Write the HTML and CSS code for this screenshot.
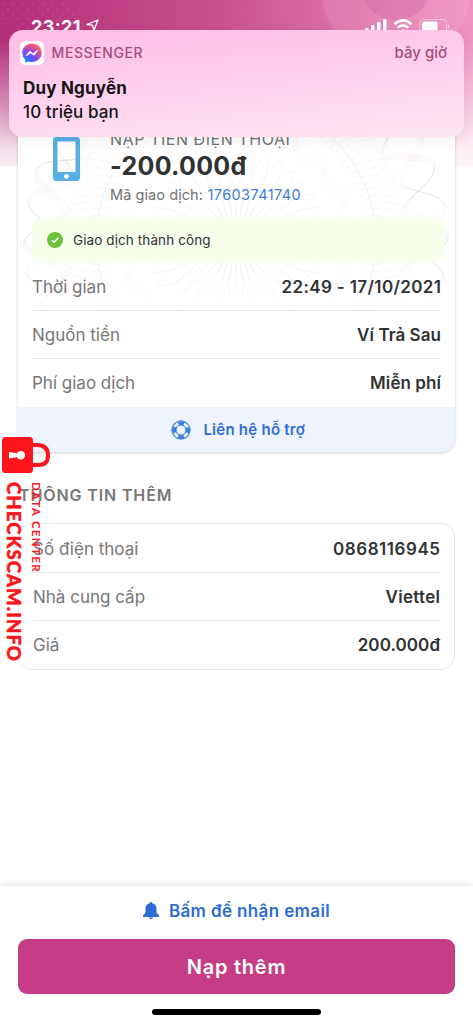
FILE: index.html
```html
<!DOCTYPE html>
<html lang="vi">
<head>
<meta charset="utf-8">
<title>Chi tiết giao dịch</title>
<link rel="stylesheet" href="styles.css">
</head>
<body>
<main class="screen">
  <header class="status">
    <svg class="status-art" viewBox="0 0 473 168" aria-hidden="true">
      <defs><pattern id="dots" width="10" height="10" patternUnits="userSpaceOnUse"><circle cx="3" cy="4" r="1.2" fill="#fff" opacity=".07"/><circle cx="8" cy="9" r="1.2" fill="#fff" opacity=".07"/></pattern></defs>
      <path d="M0 0H60Q90 15 80 30H0V75z" fill="url(#dots)"/>
      <circle cx="396" cy="-12" r="75" fill="#fff" opacity=".1"/>
      <circle cx="396" cy="-16" r="36" fill="#b94484" opacity=".18"/>
    </svg>
    <div class="status-row">
      <span class="clock t">23:21</span>
      <svg class="loc" viewBox="0 0 13 12"><path d="M1 5.5 12 1 8 11 6.5 6.2z" fill="none" stroke="#fff" stroke-width="1.3" stroke-linejoin="round"/></svg>
      <svg class="signals" viewBox="0 0 86 16"><g fill="#fff"><rect x="0" y="9" width="3.500" height="6" rx="1"/><rect x="6" y="6" width="3.500" height="9" rx="1"/><rect x="12" y="3" width="3.500" height="12" rx="1"/><rect x="18" y="0" width="3.500" height="15" rx="1"/></g><g fill="none" stroke="#fff" stroke-width="2.600"><path d="M29.500 5.200Q38-2.500 46.500 5.200"/><path d="M32.700 8.800Q38 4 43.300 8.800"/></g><path d="M35 11.500Q38 9 41 11.500L38 14.500z" fill="#fff"/><rect x="55" y=".5" width="26.500" height="14" rx="4" fill="none" stroke="#fff" stroke-opacity=".45"/><rect x="57" y="2.500" width="15.500" height="12" rx="2" fill="#fff"/><path d="M83 5q3 2.500 0 5z" fill="#fff" opacity=".5"/></svg>
    </div>
  </header>

  <section class="card">
    <svg class="guilloche" id="guilloche" viewBox="0 0 437 200" aria-hidden="true"></svg>
    <div class="summary">
      <svg class="phone" viewBox="0 0 27 44"><path fill="#57b0e5" fill-rule="evenodd" d="M3.500 0h20A3.500 3.500 0 0 1 27 3.500v37a3.500 3.500 0 0 1-3.500 3.500h-20A3.500 3.500 0 0 1 0 40.500v-37A3.500 3.500 0 0 1 3.500 0zM4.500 4.500V35h18V4.500zM13.500 37a2.400 2.400 0 1 0 .01 0z"/></svg>
      <div class="amounts">
        <div class="kind"><span class="t">NẠP TIỀN ĐIỆN THOẠI</span></div>
        <div class="amount"><span class="t">-200.000đ</span></div>
        <div class="code"><span class="t code-label">Mã giao dịch:</span> <span class="t code-no">17603741740</span></div>
      </div>
    </div>
    <div class="success">
      <svg class="check" viewBox="0 0 16 16"><circle cx="8" cy="8" r="8" fill="#6cc13c"/><path d="M4.800 8.200 7 10.300 11.500 5.800" fill="none" stroke="#fff" stroke-width="1.500"/></svg>
      <span class="t">Giao dịch thành công</span>
    </div>
    <div class="rows">
      <div class="row"><span class="t label">Thời gian</span><span class="t value time">22:49 - 17/10/2021</span></div>
      <div class="row"><span class="t label">Nguồn tiền</span><span class="t value">Ví Trả Sau</span></div>
      <div class="row"><span class="t label">Phí giao dịch</span><span class="t value">Miễn phí</span></div>
    </div>
    <div class="support">
      <svg class="buoy" viewBox="0 0 20 20"><circle cx="10" cy="10" r="7" fill="none" stroke="#3b82e0" stroke-width="4.200"/><circle cx="10" cy="10" r="7" fill="none" stroke="#f0f4fe" stroke-width="3" stroke-dasharray="5 5.996" stroke-dashoffset="-3"/><circle cx="10" cy="10" r="9.200" fill="none" stroke="#3b82e0"/><circle cx="10" cy="10" r="5" fill="none" stroke="#3b82e0"/></svg>
      <span class="t">Liên hệ hỗ trợ</span>
    </div>
  </section>

  <h2 class="heading"><span class="t">THÔNG TIN THÊM</span></h2>
  <section class="info">
    <div class="row"><span class="t label">Số điện thoại</span><span class="t value number">0868116945</span></div>
    <div class="row"><span class="t label">Nhà cung cấp</span><span class="t value provider">Viettel</span></div>
    <div class="row"><span class="t label">Giá</span><span class="t value">200.000đ</span></div>
  </section>

  <footer class="footer">
    <div class="email">
      <svg class="bell" viewBox="0 0 16 18"><path fill="#2d6cd3" d="M8 0q1.300 0 1.300 1.200Q13.500 2 13.500 7v3q0 1.600 2 2.500Q16 13 16 15H0q0-2 .5-2.500Q2.500 11.600 2.500 10V7q0-5 4.200-5.800Q6.700 0 8 0zM5.800 15.600h4.400Q9.800 17.200 8 17.200T5.800 15.600z"/></svg>
      <span class="t">Bấm để nhận email</span>
    </div>
    <button class="cta"><span class="t">Nạp thêm</span></button>
    <div class="home"></div>
  </footer>

  <aside class="notice">
    <div class="notice-top">
      <svg class="messenger" viewBox="0 0 24 24"><defs><radialGradient id="msg" cx=".2" cy="1" r="1.100"><stop offset="0" stop-color="#0a8cff"/><stop offset=".5" stop-color="#7a45f8"/><stop offset=".8" stop-color="#e0508c"/><stop offset="1" stop-color="#ff6968"/></radialGradient></defs><rect width="24" height="24" rx="5.500" fill="#fff"/><path d="M12 2.500C6.500 2.500 2.300 6.500 2.300 11.800q0 4.200 3 7v2.900l3-1.300q1.700.6 3.700.6c5.500 0 9.700-4 9.700-9.200S17.500 2.500 12 2.500z" fill="url(#msg)"/><path d="M6.200 14.800 9.700 10.300 13 12.800 17.700 9.400 14.200 14.200 10.900 11.700z" fill="#fff" stroke="#fff" stroke-width="1" stroke-linejoin="round"/></svg>
      <span class="t app">MESSENGER</span><span class="t now">bây giờ</span>
    </div>
    <div class="from"><span class="t">Duy Nguyễn</span></div>
    <div class="body"><span class="t">10 triệu bạn</span></div>
  </aside>

  <aside class="watermark">
    <svg class="lock" viewBox="0 0 49 37"><rect width="31" height="36" rx="3.500" fill="#fd151b"/><path d="M31 8h4q11 0 11 10.500T35 28h-4" fill="none" stroke="#fd151b" stroke-width="4"/><path d="M7 15l8 1.200a4.300 4.300 0 1 1 0 4L7 21.500z" fill="#fff"/></svg>
    <div class="mark-text"><span class="t site">CHECKSCAM.INFO</span><span class="t center">DATA CENTER</span></div>
  </aside>
</main>
<script src="guilloche.js"></script>
</body>
</html>
```
FILE: styles.css
```css
*{box-sizing:border-box}
body{margin:0;background:#fff;font-family:Inter,"Liberation Sans",sans-serif;color:#303233}
svg{display:block;flex:none}
.t{white-space:nowrap;display:inline-block}
.screen{position:relative;width:473px;height:1024px;overflow:hidden;display:flex;flex-direction:column;background:linear-gradient(180deg,#fff0 40px,#ffffff80 110px,#ffffffd8 150px,#ffffffe8 166px,#fff 167px),linear-gradient(100deg,#b52d79 0,#c9538f 45%,#ee8abb 90%,#f19ac5 100%) 0 0/100% 168px no-repeat}
.status{height:100px;flex:none;position:relative}
.status-art{position:absolute;inset:0;width:473px;height:168px}
.status-row{display:flex;align-items:flex-start;padding:18px 22.5px 0 31px;position:relative}
.clock{font-size:18px;line-height:18px;font-weight:700;color:#fff;letter-spacing:.35px}
.loc{width:13px;height:12px;margin:1px 0 0 5.500px}
.signals{width:86px;height:16px;margin:1px 0 0 auto}
.card{position:relative;margin:0 18px;height:352px;flex:none;border-radius:14px;background:#fff;box-shadow:0 1px 3px #0003;overflow:hidden;display:flex;flex-direction:column}
.guilloche{position:absolute;left:0;top:20px;width:437px;height:200px;mask-image:linear-gradient(#000 82%,transparent 95%)}
.summary{display:flex;position:relative;padding:27px 0 0 35px;height:117px}
.phone{width:27px;height:44px;margin-top:10px}
.amounts{margin-left:30px}
.kind{font-size:16px;line-height:20px;color:#727272;margin-top:2px;letter-spacing:.55px}
.amount{font-size:25px;line-height:30px;font-weight:700;margin-top:2px;letter-spacing:.3px}
.code{font-size:14.500px;line-height:20px;color:#727272;margin-top:4px;display:flex;gap:4.500px;letter-spacing:.07px}
.code-no{color:#3b7fd9;letter-spacing:.4px}
.success{position:relative;height:46px;margin:0 11px 0 14px;border-radius:12px;background:#f7ffec;display:flex;align-items:center;padding-left:15px;gap:10px;font-size:13.500px;letter-spacing:.1px}
.check{width:16px;height:16px}
.rows{position:relative;padding:1px 14px 0}
.row{display:flex;justify-content:space-between;align-items:center;height:48px;border-bottom:1px solid #e5e5e5;font-size:17px}
.row:last-child{border:0}
.label{color:#777}
.value{font-weight:600;letter-spacing:.08px;margin-right:-.08px}
.time{letter-spacing:.37px;margin-right:-.37px}
.number{letter-spacing:.55px;margin-right:-.55px}
.provider{letter-spacing:.3px;margin-right:-.3px}
.rows .row:first-child{height:47px}
.support{position:relative;margin-top:auto;height:45px;background:#f0f4fe;display:flex;align-items:center;justify-content:center;gap:12.500px;padding-left:3px;color:#2f6ed8;font-size:15px;font-weight:600;letter-spacing:.25px}
.buoy{width:20px;height:20px}
.heading{margin:32px 0 0 19px;font-size:16px;line-height:22px;color:#777;font-weight:600;letter-spacing:.88px}
.info{margin:17px 18px 0;border:1px solid #e8e8e8;border-radius:14px;height:147px;padding:1px 14px 0}
.footer{position:absolute;left:0;right:0;bottom:0;height:138px;background:#fff;box-shadow:0 -1px 6px #0002;padding:13px 18px 0}
.email{display:flex;align-items:center;justify-content:center;height:24px;gap:10px;font-size:17px;font-weight:600;color:#2d6cd3;letter-spacing:.38px}
.bell{width:16px;height:18px}
.cta{display:block;width:100%;height:55px;margin-top:16px;border:0;border-radius:9px;background:#c63d86;color:#fff;font:600 20px Inter,sans-serif;letter-spacing:.75px;padding:0}
.home{width:169px;height:6px;border-radius:3px;background:#000;margin:15px auto 0}
.notice{position:absolute;left:9px;top:30px;width:455px;height:107px;border-radius:14px;background:linear-gradient(175deg,#ffbfe5 5%,#ffcfed 45%,#fde5f1 100%);box-shadow:0 2px 16px #00000012;padding:10px 17px 0 11px;color:#151515}
.notice-top{display:flex;align-items:center;height:25px;color:#a64d7d;font-size:14px;font-weight:500}
.messenger{width:24px;height:24px;margin-right:7.500px}
.app{letter-spacing:.6px}
.now{margin-left:auto;font-size:15px}
.from{font-size:17px;font-weight:700;line-height:24px;margin:11px 0 0 3px;letter-spacing:.2px}
.body{font-size:17px;font-weight:500;line-height:24px;margin:0 0 0 3px;letter-spacing:.1px}
.watermark{position:absolute;left:2px;top:437px;width:50px;color:#fd151b}
.lock{width:49px;height:37px}
.mark-text{display:flex;margin:8px 0 0 2px;height:185px}
.mark-text .t{writing-mode:vertical-rl}
.site{font:900 18.500px/20px Lato,sans-serif;letter-spacing:1.100px;-webkit-text-stroke:.5px #fd151b}
.center{font:700 11.500px/14px Lato,sans-serif;margin-left:5px;letter-spacing:1.350px}
```
FILE: guilloche.js
```js
// Draws the banknote-style rosette behind the transaction summary.
var svg = document.getElementById('guilloche');
var CX = 218, CY = 120;

function ring(radius, amplitude, lobes, phase, opacity, ripple) {
  var d = '';
  for (var i = 0; i <= 720; i++) {
    var a = i * Math.PI / 360;
    var r = radius + amplitude * Math.cos(lobes * a + phase) + (ripple || 0) * Math.cos(lobes * 3 * a);
    d += (i ? 'L' : 'M') + (CX + r * Math.cos(a)).toFixed(1) + ' ' + (CY + r * Math.sin(a)).toFixed(1);
  }
  var path = document.createElementNS('http://www.w3.org/2000/svg', 'path');
  path.setAttribute('d', d);
  path.setAttribute('fill', 'none');
  path.setAttribute('stroke', '#a8606e');
  path.setAttribute('stroke-width', '.7');
  path.setAttribute('opacity', opacity);
  svg.appendChild(path);
}

for (var k = 0; k < 4; k++) {
  ring(189 + k * 2, 21 - k, 18, k * .12, .1);
  ring(189 + k * 2, 21 - k, 18, Math.PI - k * .12, .08);
}
for (k = 0; k < 5; k++) {
  ring(150, 20, 26, k * Math.PI * 2 / 5, .07);
  ring(105 + k * 3, 5, 18, k * .3, .06, 1.5);
}
ring(140, 0, 1, 0, .14);
for (k = 0; k < 3; k++) {
  ring(50, 40, 12, k * Math.PI * 2 / 3, .09);
}
```
